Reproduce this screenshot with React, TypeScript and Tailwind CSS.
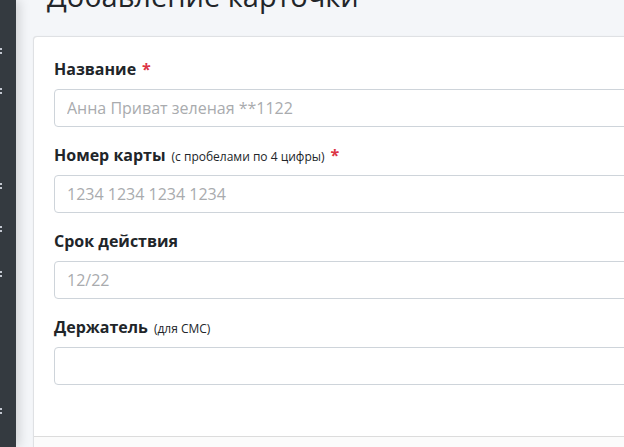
const fields = [
  { label: "Название", hint: "", required: true, placeholder: "Анна Приват зеленая **1122" },
  { label: "Номер карты", hint: "(с пробелами по 4 цифры)", required: true, placeholder: "1234 1234 1234 1234" },
  { label: "Срок действия", hint: "", required: false, placeholder: "12/22" },
  { label: "Держатель", hint: "(для СМС)", required: false, placeholder: "" },
];

// cut-off menu icons peeking out of the collapsed sidebar
const marks = [48, 88, 183, 226, 271, 408];

function SidebarMark({ top }: { top: number }) {
  return (
    <div className="absolute left-0 flex flex-col gap-[2px]" style={{ top }}>
      <span className="block w-[2px] h-[2px] bg-[#c2c7d0]" />
      <span className="block w-[2px] h-[2px] bg-[#c2c7d0]" />
    </div>
  );
}

export default function App() {
  return (
    <div
      className="flex w-[624px] h-[447px] overflow-hidden bg-[#f4f6f9]"
      style={{ fontFamily: '"Open Sans", "Liberation Sans", sans-serif' }}
    >
      <aside className="relative z-10 w-[16px] shrink-0 bg-[#343a40] shadow-[3px_0_12px_rgba(0,0,0,0.16)]">
        {marks.map((m) => (
          <SidebarMark key={m} top={m} />
        ))}
      </aside>

      <main className="flex-1 min-w-0">
        <div className="flow-root h-[36px] pl-[31px]">
          <h1 className="-mt-[19px] text-[29px] leading-[30px] font-normal text-[#212529] whitespace-nowrap">
            Добавление карточки
          </h1>
        </div>

        <div className="ml-[17px] w-[640px] bg-white border border-[#dfe1e4] rounded-tl-[4px] shadow-[0_0_1px_rgba(0,0,0,0.1)]">
          <div className="pt-[20px] pb-[35px] px-[20px]">
            {fields.map((f) => (
              <div key={f.label} className="mb-[16px]">
                <label className="flex items-baseline h-[24px] mb-[8px] whitespace-nowrap text-[#212529]">
                  <span className="text-[16px] font-bold">{f.label}</span>
                  {f.hint && <span className="ml-[6px] text-[12px] font-normal">{f.hint}</span>}
                  {f.required && <span className="ml-[6px] text-[16px] font-bold text-[#dc3545]">*</span>}
                </label>
                <input
                  type="text"
                  placeholder={f.placeholder}
                  className="block w-full h-[38px] px-[12px] border border-[#ced4da] rounded-[4px] text-[16px] text-[#495057] placeholder:text-[#a9abae] outline-none"
                />
              </div>
            ))}
          </div>
          <div className="h-[20px] border-t border-[#dcdcdc] bg-[#fbfbfb]" />
        </div>
      </main>
    </div>
  );
}
